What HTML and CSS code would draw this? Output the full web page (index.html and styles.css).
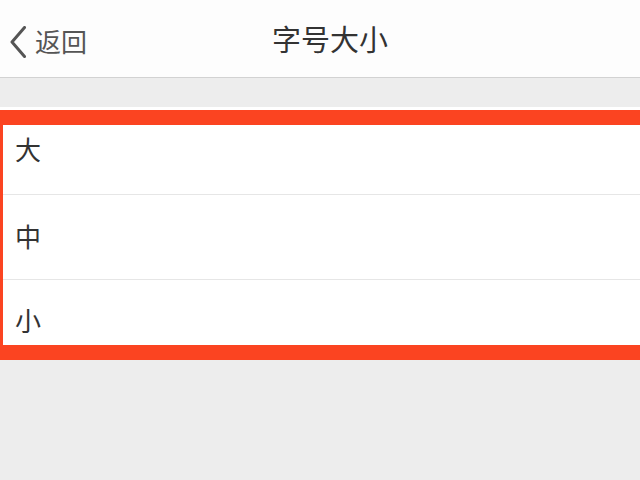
FILE: index.html
```html
<!DOCTYPE html>
<html lang="zh">
<head>
<meta charset="utf-8">
<title>字号大小</title>
<link rel="stylesheet" href="styles.css">
</head>
<body>
<div class="page">
  <header class="nav">
    <div class="back">
      <svg class="chev" width="18" height="32" viewBox="0 0 18 32"><path d="M15.5 1.5 L3 16 L15.5 30.5" fill="none" stroke="#555" stroke-width="3" stroke-linecap="round" stroke-linejoin="round"/></svg>
      <span class="back-text">返回</span>
    </div>
    <div class="title">字号大小</div>
  </header>
  <ul class="list">
    <li class="row">大</li>
    <li class="row">中</li>
    <li class="row">小</li>
  </ul>
  <div class="highlight"></div>
</div>
</body>
</html>
```

FILE: styles.css
```css
html, body {
  margin: 0;
  padding: 0;
  overflow: hidden;
  background: #ededed;
  height: 100%;
}
.page {
  position: relative;
  min-height: 480px;
  font-family: "Noto Sans CJK SC", "Noto Sans", sans-serif;
}
.nav {
  height: 77px;
  background: #fdfdfd;
  border-bottom: 1px solid #d2d2d2;
  position: relative;
  display: flex;
  align-items: center;
  justify-content: center;
}
.back {
  position: absolute;
  left: 9px;
  top: 26px;
  display: flex;
  align-items: center;
  gap: 8px;
}
.chev {
  display: block;
}
.back-text {
  font-size: 26px;
  color: #555;
  line-height: 30px;
  margin-top: -2px;
}
.title {
  font-size: 29px;
  color: #333;
  line-height: 30px;
  margin-left: 20px;
  margin-top: -2px;
}
.list {
  list-style: none;
  margin: 29px 0 0 0;
  padding: 0;
  background: #fff;
}
.row {
  display: flex;
  align-items: center;
  padding-left: 15px;
  padding-bottom: 4px;
  font-size: 26px;
  color: #333;
  border-top: 1px solid #e6e6e6;
  box-sizing: border-box;
  height: 85px;
}
.row:first-child {
  border-top: none;
  height: 87px;
  padding-bottom: 5px;
}
.row:last-child {
  height: 81px;
  padding-bottom: 2px;
}
.highlight {
  position: absolute;
  left: 0;
  top: 110px;
  width: 100%;
  height: 250px;
  box-sizing: border-box;
  border-top: 15px solid #fb4421;
  border-bottom: 15px solid #fb4421;
  border-left: 3px solid #fb4421;
}
```
